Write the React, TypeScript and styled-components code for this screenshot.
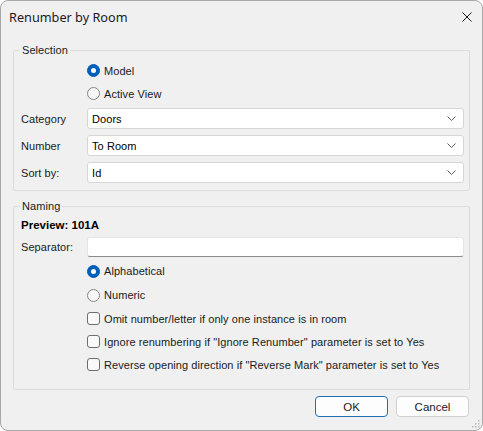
import React from 'react';
import styled, { createGlobalStyle } from 'styled-components';

const GlobalStyle = createGlobalStyle`
  html, body {
    margin: 0;
    padding: 0;
    background: #ffffff;
  }
  body {
    font-family: "Liberation Sans", Arial, sans-serif;
    font-size: 11px;
    color: #000000;
  }
`;

const Window = styled.div`
  position: relative;
  box-sizing: border-box;
  width: 483px;
  height: 431px;
  background: #f0f0f0;
  border: 1px solid #a9a9a9;
  border-radius: 8px;
  display: flex;
  flex-direction: column;
  overflow: hidden;
`;

const TitleBar = styled.div`
  height: 31px;
  flex: none;
  display: flex;
  align-items: center;
  justify-content: space-between;
  padding: 0 10px 0 8px;
  font-family: "Noto Sans", "Segoe UI", sans-serif;
  font-size: 12.7px;
  color: #1b1b1b;
`;

const CloseIcon = styled.svg`
  width: 10px;
  height: 10px;
  stroke: #1b1b1b;
  stroke-width: 1;
`;

const Body = styled.div`
  flex: 1;
  display: flex;
  flex-direction: column;
  padding: 0 12px;
  letter-spacing: 0.07px;
`;

const Group = styled.fieldset<{ $top: number }>`
  margin: ${(p) => p.$top}px 0 0;
  padding: 0 5px 0 6px;
  border: 1px solid #dcdcdc;
  border-radius: 2px;
  min-width: 0;
`;

const Legend = styled.legend`
  padding: 0 2px;
  line-height: 13px;
  color: #1a1a1a;
`;

const Rows = styled.div<{ $pt: number; $pb: number }>`
  display: grid;
  grid-template-columns: 66px 1fr;
  padding: ${(p) => p.$pt}px 0 ${(p) => p.$pb}px 1px;
`;

const Label = styled.div<{ $h: number; $mt?: number }>`
  grid-column: 1;
  height: ${(p) => p.$h}px;
  margin-top: ${(p) => p.$mt ?? 0}px;
  display: flex;
  align-items: center;
  color: #1a1a1a;
`;

const Cell = styled.div<{ $h: number; $mt?: number }>`
  grid-column: 2;
  height: ${(p) => p.$h}px;
  margin-top: ${(p) => p.$mt ?? 0}px;
  display: flex;
  align-items: center;
`;

const Preview = styled.div`
  grid-column: 1 / span 2;
  height: 16px;
  margin-top: 4px;
  display: flex;
  align-items: center;
  font-weight: bold;
  font-size: 11.5px;
  letter-spacing: 0;
`;

const Option = styled.label`
  display: flex;
  align-items: center;
  gap: 4px;
  color: #1a1a1a;
`;

const RadioDot = styled.span<{ $on?: boolean }>`
  box-sizing: border-box;
  width: 13px;
  height: 13px;
  border-radius: 50%;
  flex: none;
  display: flex;
  align-items: center;
  justify-content: center;
  background: ${(p) => (p.$on ? '#005fb8' : '#f7f7f7')};
  border: 1px solid ${(p) => (p.$on ? '#005fb8' : '#858585')};

  &::after {
    content: '';
    display: ${(p) => (p.$on ? 'block' : 'none')};
    width: 5px;
    height: 5px;
    border-radius: 50%;
    background: #ffffff;
  }
`;

const CheckBox = styled.span`
  box-sizing: border-box;
  width: 13px;
  height: 13px;
  flex: none;
  border-radius: 3px;
  border: 1px solid #6e6e6e;
  background: #f9f9f9;
`;

const Combo = styled.div`
  box-sizing: border-box;
  width: 100%;
  height: 100%;
  display: flex;
  align-items: center;
  justify-content: space-between;
  padding: 0 7px 0 4px;
  background: #ffffff;
  border: 1px solid #d6d6d6;
  border-radius: 3px;
`;

const Chevron = styled.svg`
  width: 9px;
  height: 5px;
  fill: none;
  stroke: #5f5f5f;
  stroke-width: 1;
`;

const TextBox = styled.div`
  box-sizing: border-box;
  width: 100%;
  height: 100%;
  background: #ffffff;
  border: 1px solid #e5e5e5;
  border-bottom-color: #8a8a8a;
  border-radius: 3px;
`;

const Footer = styled.div`
  display: flex;
  justify-content: flex-end;
  gap: 8px;
  margin-top: 6px;
  padding-right: 1px;
`;

const Button = styled.button<{ $primary?: boolean }>`
  box-sizing: border-box;
  width: 73px;
  height: 21px;
  padding: 0;
  font-family: "Liberation Sans", Arial, sans-serif;
  font-size: 11.5px;
  color: #1a1a1a;
  background: #fdfdfd;
  border: 1px solid ${(p) => (p.$primary ? '#1f6fb5' : '#d0d0d0')};
  border-radius: 4px;
`;

const Grip = styled.svg`
  position: absolute;
  right: 2px;
  bottom: 2px;
  width: 9px;
  height: 9px;
  fill: #b8b8b8;
`;

const Radio = ({ on, text }: { on?: boolean; text: string }) => (
  <Option>
    <RadioDot $on={on} />
    {text}
  </Option>
);

const Check = ({ text }: { text: string }) => (
  <Option>
    <CheckBox />
    {text}
  </Option>
);

const Select = ({ value }: { value: string }) => (
  <Combo>
    <span>{value}</span>
    <Chevron viewBox="0 0 9 5">
      <polyline points="0.5,0.5 4.5,4.5 8.5,0.5" />
    </Chevron>
  </Combo>
);

const App = () => {
  return (
    <>
      <GlobalStyle />
      <Window>
        <TitleBar>
          <span>Renumber by Room</span>
          <CloseIcon viewBox="0 0 10 10">
            <line x1="0.5" y1="0.5" x2="9.5" y2="9.5" />
            <line x1="9.5" y1="0.5" x2="0.5" y2="9.5" />
          </CloseIcon>
        </TitleBar>

        <Body>
          {/* selection */}
          <Group $top={12}>
            <Legend>Selection</Legend>
            <Rows $pt={2} $pb={7}>
              <Cell $h={23}>
                <Radio on text="Model" />
              </Cell>
              <Cell $h={23}>
                <Radio text="Active View" />
              </Cell>
              <Label $h={21} $mt={3}>Category</Label>
              <Cell $h={21} $mt={3}>
                <Select value="Doors" />
              </Cell>
              <Label $h={21} $mt={6}>Number</Label>
              <Cell $h={21} $mt={6}>
                <Select value="To Room" />
              </Cell>
              <Label $h={21} $mt={6}>Sort by:</Label>
              <Cell $h={21} $mt={6}>
                <Select value="Id" />
              </Cell>
            </Rows>
          </Group>

          {/* naming */}
          <Group $top={9}>
            <Legend>Naming</Legend>
            <Rows $pt={0} $pb={13}>
              <Preview>Preview: 101A</Preview>
              <Label $h={20} $mt={4}>Separator:</Label>
              <Cell $h={20} $mt={4}>
                <TextBox />
              </Cell>
              <Cell $h={24} $mt={2}>
                <Radio on text="Alphabetical" />
              </Cell>
              <Cell $h={24}>
                <Radio text="Numeric" />
              </Cell>
              <Cell $h={23}>
                <Check text="Omit number/letter if only one instance is in room" />
              </Cell>
              <Cell $h={23}>
                <Check text={'Ignore renumbering if "Ignore Renumber" parameter is set to Yes'} />
              </Cell>
              <Cell $h={23}>
                <Check text={'Reverse opening direction if "Reverse Mark" parameter is set to Yes'} />
              </Cell>
            </Rows>
          </Group>

          <Footer>
            <Button $primary>OK</Button>
            <Button>Cancel</Button>
          </Footer>
        </Body>

        <Grip viewBox="0 0 9 9">
          <rect x="7" y="1" width="1.5" height="1.5" />
          <rect x="4" y="4" width="1.5" height="1.5" />
          <rect x="7" y="4" width="1.5" height="1.5" />
          <rect x="1" y="7" width="1.5" height="1.5" />
          <rect x="4" y="7" width="1.5" height="1.5" />
          <rect x="7" y="7" width="1.5" height="1.5" />
        </Grip>
      </Window>
    </>
  );
};

export default App;
